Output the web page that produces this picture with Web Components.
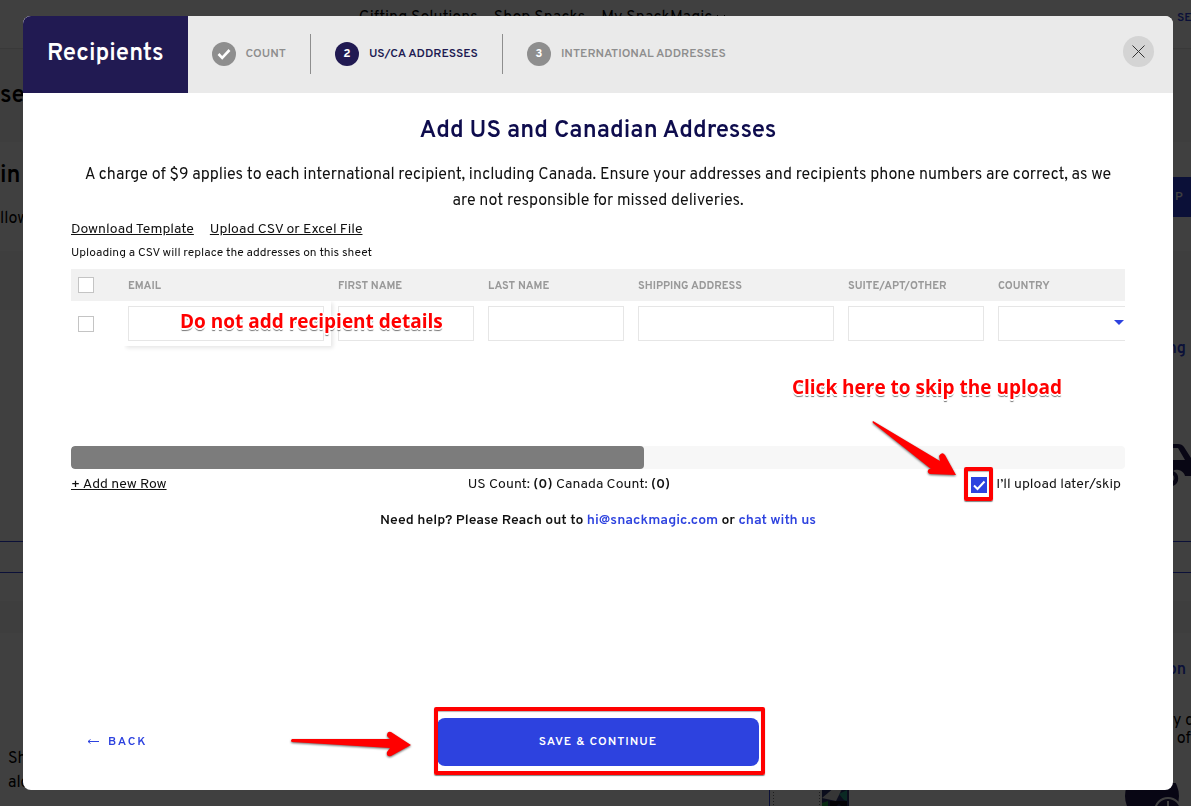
<!DOCTYPE html>
<html lang="en">
<head>
  <meta charset="UTF-8">
  <meta name="viewport" content="width=device-width, initial-scale=1.0">
  <title>Recipients</title>
  <style>
    :root {
      --navy: #211a52;
      --blue: #2d42df;
      --gray: #8e8e8e;
      --red: #ff0000;
    }
    body {
      margin: 0;
      font-family: "Overpass", Roboto, "Liberation Sans", sans-serif;
      font-size: 14px;
      color: #111;
    }
  </style>
</head>
<body>
  <landing-page></landing-page>
  <recipients-modal>
    <step-item slot="steps" state="done" label="COUNT"></step-item>
    <step-item slot="steps" state="active" number="2" label="US/CA ADDRESSES"></step-item>
    <step-item slot="steps" number="3" label="INTERNATIONAL ADDRESSES"></step-item>
    <address-grid></address-grid>
  </recipients-modal>

  <script>
    // Page that stays visible around the modal
    class LandingPage extends HTMLElement {
      connectedCallback() {
        this.attachShadow({ mode: 'open' });
        this.shadowRoot.innerHTML = `
          <style>
            :host {
              display: block;
              position: fixed;
              inset: 0;
              overflow: hidden;
              background: #fff;
              color: #000;
              font-size: 16px;
              line-height: 24px;
              white-space: nowrap;
            }
            * { box-sizing: border-box; }
            header {
              display: flex;
              height: 49px;
              padding-top: 6px;
              border-bottom: 1px solid #e4e4e4;
            }
            nav {
              flex: 1;
              display: flex;
              justify-content: center;
              gap: 16px;
              padding-right: 106px;
            }
            nav svg { margin: 8px 0 0 4px; vertical-align: top; }
            .login { width: 14px; margin-left: -14px; font-size: 12px; font-weight: 600; color: var(--blue); line-height: 24px; }
            section { display: flex; justify-content: space-between; }
            .tint { background: #f7f7f7; }
            .side { width: 18px; flex: none; }
            .left { width: 23px; flex: none; }
            .big { font-size: 24px; font-weight: 600; }
            .small { line-height: 24px; padding-left: 8px; }
            .hero { height: 93px; padding-top: 35px; }
            .intro { height: 109px; padding-top: 22px; }
            .intro .big { padding-bottom: 19px; }
            .cta { margin-top: 13px; height: 40px; background: var(--blue); color: #fff; font-size: 12px; font-weight: 600; line-height: 40px; padding-left: 2px; }
            .gap { height: 59px; }
            .cards { height: 231px; padding-top: 27px; }
            .blue { display: flex; justify-content: flex-end; padding-right: 5px; color: var(--blue); font-weight: 600; }
            .truck { display: block; margin-top: 80px; }
            .rule { height: 32px; border: 1px solid var(--blue); border-width: 1px 0; }
            .space { height: 28px; }
            .band { height: 32px; }
            .last { height: 150px; padding-top: 25px; }
            .last .left { padding-top: 89px; }
            .copy { padding-top: 30px; line-height: 18px; }
            .bottom { display: flex; justify-content: flex-end; align-items: flex-start; }
            .thumb { display: block; margin-right: 276px; }
          </style>
          <header>
            <nav>
              <span>Gifting Solutions</span><span>Shop Snacks</span>
              <span>My SnackMagic<svg width="10" height="6" viewBox="0 0 10 6"><path d="M1 1L5 5L9 1" fill="none" stroke="#000"/></svg></span>
            </nav>
            <span class="login">SE</span>
          </header>
          <section class="hero tint"><div class="left big">se</div></section>
          <section class="intro">
            <div class="left"><div class="big">in</div>llow</div>
            <div class="side"><div class="cta">P</div></div>
          </section>
          <section class="gap tint"></section>
          <section class="cards">
            <div></div>
            <div class="side">
              <div class="blue">ng</div>
              <svg class="truck" width="18" height="48" viewBox="0 0 18 48" fill="#211a52">
                <path d="M0 3H5Q9 3 11 6L18 17V35H12A8 8 0 0 0 0 30V19H12L5 7H0Z"/>
                <path d="M0 30A8 8 0 0 1 0 45V40A4 4 0 0 0 0 34Z"/>
              </svg>
            </div>
          </section>
          <div class="rule"></div>
          <div class="space"></div>
          <div class="band tint"></div>
          <section class="last">
            <div class="left small">Sh<br>ald</div>
            <div class="side"><div class="blue">on</div><div class="copy">y d<br>&nbsp;of</div></div>
          </section>
          <div class="bottom">
            <svg class="thumb" width="80" height="30" viewBox="0 0 80 30">
              <path d="M.5 0V30" stroke="#2d42df"/>
              <path d="M4.500 0V30M50.500 0V30" stroke="#777" stroke-dasharray="1 2"/>
              <rect x="53" width="27" height="30" fill="#2d3470"/>
              <path d="M53 15L66 4H74L67 18Z" fill="#d8d8d8"/>
              <path d="M70 11L78 7V18L75 17Z" fill="#2aa58c"/>
              <path d="M53 20L59 18V30H53Z" fill="#25b04e"/>
              <path d="M61 18H78V29L70 21L61 28Z" fill="#15131e"/>
            </svg>
            <svg width="66" height="30" viewBox="0 0 66 30">
              <circle cx="27" cy="13" r="27" fill="#211a52"/>
              <circle cx="43" cy="28" r="13" fill="#211a52" stroke="#fff" stroke-width="2"/>
              <path d="M43 18V28" stroke="#fff" stroke-width="2"/>
            </svg>
          </div>
        `;
      }
    }

    class StepItem extends HTMLElement {
      connectedCallback() {
        const done = this.getAttribute('state') === 'done';
        const badge = done
          ? '<svg width="14" height="12" viewBox="0 0 14 12"><path d="M1.500 6L5.200 9.800L12.500 2" fill="none" stroke="#fff" stroke-width="2.600"/></svg>'
          : this.getAttribute('number');
        this.attachShadow({ mode: 'open' });
        this.shadowRoot.innerHTML = `
          <style>
            :host {
              display: flex;
              align-items: center;
              gap: 10px;
              height: 40px;
              padding: 0 24px;
              border-right: 1px solid var(--gray);
              color: var(--gray);
              font-size: 12px;
              font-weight: 600;
              white-space: nowrap;
            }
            :host(:last-of-type) { border-right: 0; }
            :host([state="active"]) { color: var(--navy); }
            .badge {
              display: flex;
              align-items: center;
              justify-content: center;
              width: 24px;
              height: 24px;
              border-radius: 50%;
              background: currentColor;
            }
            .badge span { color: #fff; display: flex; font-weight: 700; }
          </style>
          <span class="badge"><span>${badge}</span></span>
          <span>${this.getAttribute('label')}</span>
        `;
      }
    }

    class AddressGrid extends HTMLElement {
      connectedCallback() {
        const columns = [
          ['EMAIL', 210], ['FIRST NAME', 150], ['LAST NAME', 150],
          ['SHIPPING ADDRESS', 210], ['SUITE/APT/OTHER', 150], ['COUNTRY', 150]
        ];
        const cols = columns.map(([, w]) => `<col style="width:${w}px">`).join('');
        const heads = columns.map(([name]) => `<th scope="col">${name}</th>`).join('');
        const cells = columns.map(([name]) => name === 'COUNTRY'
          ? '<td><div class="pick"><select aria-label="COUNTRY"><option></option></select></div></td>'
          : `<td><input type="text" aria-label="${name}"></td>`).join('');
        this.attachShadow({ mode: 'open' });
        this.shadowRoot.innerHTML = `
          <style>
            :host { display: block; }
            * { box-sizing: border-box; }
            .view { height: 177px; overflow: hidden; }
            table { width: 1070px; table-layout: fixed; border-collapse: separate; border-spacing: 0; }
            th {
              height: 32px;
              padding: 2px 7px 0;
              background: #f1f1f1;
              color: #999;
              font-size: 11px;
              font-weight: 700;
              text-align: left;
            }
            td { height: 45px; padding: 0 7px; }
            tr > :first-child { padding: 0; }
            td:nth-child(2) { position: relative; }
            td:nth-child(2)::after {
              content: "";
              position: absolute;
              inset: 0 0 0 3px;
              box-shadow: 2px 2px 4px rgba(0, 0, 0, 0.1);
              clip-path: inset(0 -6px -6px 0);
              pointer-events: none;
            }
            input[type="checkbox"] {
              appearance: none;
              display: block;
              width: 16px;
              height: 16px;
              margin: 0 7px;
              border: 1px solid #c4c4c4;
              background: #fff;
            }
            input[type="text"], select {
              display: block;
              width: 100%;
              height: 35px;
              margin: 0;
              padding: 0 8px;
              border: 1px solid #e6e6e6;
              border-radius: 0;
              background: #fff;
              font: inherit;
              appearance: none;
            }
            .pick { position: relative; }
            .pick::after {
              content: "";
              position: absolute;
              left: 116px;
              top: 14px;
              border: 5px solid transparent;
              border-top-color: var(--blue);
              border-bottom: 0;
            }
            .track { height: 23px; border-radius: 4px; background: #f7f7f7; overflow: hidden; }
            .bar { width: 54.400%; height: 100%; border-radius: 4px; background: #7c7c7c; }
          </style>
          <div class="view">
            <table>
              <colgroup><col style="width:50px">${cols}</colgroup>
              <thead><tr><th><input type="checkbox" aria-label="Select all"></th>${heads}</tr></thead>
              <tbody><tr><td><input type="checkbox" aria-label="Select row"></td>${cells}</tr></tbody>
            </table>
          </div>
          <div class="track"><div class="bar"></div></div>
        `;
      }
    }

    class RecipientsModal extends HTMLElement {
      connectedCallback() {
        this.attachShadow({ mode: 'open' });
        this.shadowRoot.innerHTML = `
          <style>
            :host {
              display: flex;
              position: relative;
              min-height: 100vh;
              box-sizing: border-box;
              padding: 16px 18px 16px 23px;
              background: rgba(0, 0, 0, 0.75);
            }
            * { box-sizing: border-box; }
            .modal {
              position: relative;
              flex: 1;
              min-width: 0;
              display: flex;
              flex-direction: column;
              border-radius: 8px;
              background: #fff;
            }
            header {
              display: flex;
              align-items: center;
              height: 77px;
              padding-right: 19px;
              border-radius: 8px 8px 0 0;
              background: #eaeaea;
              overflow: hidden;
            }
            h1 {
              align-self: stretch;
              margin: 0;
              padding: 0 24px;
              background: var(--navy);
              color: #fff;
              font-size: 24px;
              font-weight: 600;
              line-height: 76px;
            }
            .steps { flex: 1; display: flex; align-self: flex-start; padding-top: 18px; }
            .close {
              display: flex;
              align-items: center;
              justify-content: center;
              width: 31px;
              height: 31px;
              margin-bottom: 6px;
              padding: 0;
              border: 0;
              border-radius: 50%;
              background: #d4d4d4;
            }
            main { flex: 1; display: flex; flex-direction: column; padding: 22px 48px 24px; }
            h2 { margin: 0 0 15px; color: #0e0c4d; font-size: 24px; font-weight: 600; line-height: 32px; text-align: center; }
            .lead { margin: 0 0 4px; padding: 0 12px; font-size: 16px; line-height: 26px; text-align: center; }
            .files { display: flex; gap: 16px; line-height: 24px; }
            a { color: #111; }
            b { font-weight: 600; }
            .note { margin: 0 0 5px; font-size: 12px; line-height: 22px; }
            .totals { display: flex; justify-content: space-between; align-items: center; height: 30px; }
            .later { display: flex; align-items: center; gap: 9px; padding-right: 4px; }
            .mark { position: relative; display: flex; margin-top: 2px; }
            .mark input {
              appearance: none;
              width: 16px;
              height: 16px;
              margin: 0;
              background: var(--blue);
            }
            .mark svg { position: absolute; left: 0; top: 0; pointer-events: none; }
            .mark::after, .save::after {
              content: "";
              position: absolute;
              border: 4px solid var(--red);
              border-radius: 2px;
              box-shadow: 0 1px 1px rgba(0, 0, 0, 0.5), inset 0 1px 1px rgba(0, 0, 0, 0.3);
              pointer-events: none;
            }
            .mark::after { inset: -10px -6px -8px -7px; }
            .help { margin: 0; padding-top: 10px; font-weight: 600; line-height: 24px; text-align: center; }
            .help a { color: var(--blue); text-decoration: none; }
            footer { display: grid; grid-template-columns: 1fr 322px 1fr; align-items: center; margin-top: auto; }
            .back {
              display: flex;
              align-items: center;
              gap: 9px;
              justify-self: start;
              margin-left: 16px;
              padding: 0;
              border: 0;
              background: none;
              color: var(--blue);
              font: inherit;
              font-size: 12px;
              font-weight: 600;
              letter-spacing: 2px;
            }
            .save { position: relative; }
            .save::after { inset: -11px -6px -9px -3px; }
            .save button {
              display: block;
              width: 100%;
              height: 48px;
              border: 0;
              border-radius: 8px;
              background: var(--blue);
              color: #fff;
              font: inherit;
              font-size: 12px;
              font-weight: 600;
              letter-spacing: 1px;
            }
            /* red notes laid over the form */
            .callout {
              position: absolute;
              color: var(--red);
              font-family: "Open Sans", "Noto Sans", sans-serif;
              font-size: 19px;
              font-weight: 700;
              line-height: 26px;
              white-space: nowrap;
              text-shadow: -1px -1px 0 #fff, 1px -1px 0 #fff, -1px 1px 0 #fff, 1px 1px 0 #fff,
                -2px 0 0 #fff, 2px 0 0 #fff, 0 2px 0 #fff, 0 3px 1px #777;
              pointer-events: none;
            }
            .details { left: 157px; top: 292px; }
            .skip { right: 111px; top: 358px; }
            .arrow { position: absolute; fill: var(--red); filter: drop-shadow(0 1px 1px rgba(0, 0, 0, 0.6)); pointer-events: none; }
            .to-skip { right: 214px; top: 402px; }
            .to-save { left: 266px; bottom: 30px; }
          </style>
          <div class="modal" role="dialog" aria-label="Recipients">
            <header>
              <h1>Recipients</h1>
              <div class="steps"><slot name="steps"></slot></div>
              <button class="close" aria-label="Close">
                <svg width="13" height="13" viewBox="0 0 13 13"><path d="M.5.5L12.500 12.500M12.500.5L.5 12.500" stroke="#333"/></svg>
              </button>
            </header>
            <main>
              <h2>Add US and Canadian Addresses</h2>
              <p class="lead">A charge of $9 applies to each international recipient, including Canada. Ensure your addresses and recipients phone numbers are correct, as we are not responsible for missed deliveries.</p>
              <div class="files"><a href="#template">Download Template</a><a href="#upload">Upload CSV or Excel File</a></div>
              <p class="note">Uploading a CSV will replace the addresses on this sheet</p>
              <slot></slot>
              <div class="totals">
                <div><a href="#row">+ Add new Row</a></div>
                <div>US Count: <b>(0)</b> Canada Count: <b>(0)</b></div>
                <div class="later">
                  <span class="mark">
                    <input type="checkbox" id="later" checked>
                    <svg width="16" height="16" viewBox="0 0 16 16"><path d="M3 8.500L6.500 12L13.500 4.500" fill="none" stroke="#fff" stroke-width="2"/></svg>
                  </span>
                  <label for="later">I’ll upload later/skip</label>
                </div>
              </div>
              <p class="help">Need help? Please Reach out to <a href="mailto:hi@snackmagic.com">hi@snackmagic.com</a> or <a href="#chat">chat with us</a></p>
              <footer>
                <button class="back">
                  <svg width="12" height="6" viewBox="0 0 12 6"><path d="M12 2.500H1M3.500 .5L1 2.500L3.500 4.500" fill="none" stroke="#2d42df"/></svg>
                  BACK
                </button>
                <div class="save"><button>SAVE &amp; CONTINUE</button></div>
              </footer>
            </main>
            <div class="callout details">Do not add recipient details</div>
            <div class="callout skip">Click here to skip the upload</div>
            <svg class="arrow to-skip" width="90" height="62" viewBox="0 0 90 62">
              <path d="M4 3Q3 4 4 5L62 51L60 51Q57 54 61 56L87 57L76 37Q73 33 70 38L71 43Z"/>
            </svg>
            <svg class="arrow to-save" width="126" height="32" viewBox="0 0 126 32">
              <path d="M3 11Q1 13 3 14L101 20L98 24Q97 29 102 28L122 17L102 4Q98 3 98 8L101 11Z"/>
            </svg>
          </div>
        `;
      }
    }

    customElements.define('landing-page', LandingPage);
    customElements.define('step-item', StepItem);
    customElements.define('address-grid', AddressGrid);
    customElements.define('recipients-modal', RecipientsModal);
  </script>
</body>
</html>
